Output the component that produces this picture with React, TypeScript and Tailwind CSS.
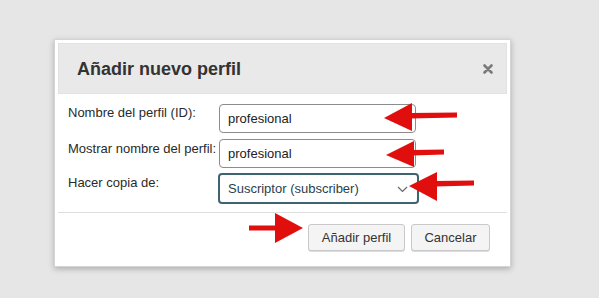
import React from "react";

export default function App() {
  return (
    <div
      className="relative w-[599px] h-[298px] bg-[#e6e6e6] overflow-hidden"
      style={{ fontFamily: '"Liberation Sans", Arial, sans-serif' }}
    >
      <div className="pt-[39px] pl-[54px]">
        <div className="w-[457px] h-[228px] bg-white border border-[#d4d4d4] shadow-[0_2px_6px_rgba(0,0,0,0.25)] p-[3px] flex flex-col">
          <div className="h-[51px] bg-[#e9e9e9] border border-[#e2e2e2] flex items-center justify-between pl-[18px] pr-[13px]">
            <span className="text-[18px] font-bold text-[#333] pt-[2px]">Añadir nuevo perfil</span>
            <svg width="10" height="10" viewBox="0 0 10 10">
              <path d="M1.5 1.5 L8.5 8.5 M8.5 1.5 L1.5 8.5" stroke="#7a7a7a" strokeWidth="2.6" strokeLinecap="round" />
            </svg>
          </div>
          <div className="grid grid-cols-[151px_auto] pl-[10px] pt-[10px] text-[13px] text-[#2a2a2a]">
            <div className="pt-[1px] leading-[15px]">Nombre del perfil (ID):</div>
            <div className="w-[197px] h-[29px] border border-[#8c8c8c] rounded-[4px] flex items-center pl-[8px] text-[#222]">profesional</div>
            <div className="pt-[2px] mt-[6px] leading-[15px] whitespace-nowrap">Mostrar nombre del perfil:</div>
            <div className="w-[197px] h-[29px] mt-[6px] border border-[#8c8c8c] rounded-[4px] flex items-center pl-[8px] text-[#222]">profesional</div>
            <div className="pt-[2px] mt-[5px] leading-[15px]">Hacer copia de:</div>
            <div className="-ml-[1px] w-[201px] h-[31px] mt-[5px] border-2 border-[#3e6472] rounded-[4px] flex items-center justify-between pl-[8px] pr-[9px] text-[#2b3f4c]">
              <span>Suscriptor (subscriber)</span>
              <svg width="11" height="7" viewBox="0 0 11 7" className="mt-[2px]">
                <path d="M1 1 L5.5 5.5 L10 1" stroke="#666" strokeWidth="1.2" fill="none" />
              </svg>
            </div>
          </div>
          <div className="mt-[8px] border-t border-[#dedede]" />
          <div className="flex justify-end gap-[6px] pr-[17px] pt-[11px]">
            <button className="w-[97px] h-[27px] bg-[#f4f4f4] border border-[#c9c9c9] rounded-[3px] text-[13px] text-[#333] shadow-[0_1px_0_#ddd]">
              Añadir perfil
            </button>
            <button className="w-[79px] h-[27px] bg-[#f4f4f4] border border-[#c9c9c9] rounded-[3px] text-[13px] text-[#333] shadow-[0_1px_0_#ddd]">
              Cancelar
            </button>
          </div>
        </div>
      </div>
      <svg className="absolute left-0 top-0" width="599" height="298" viewBox="0 0 599 298">
        <g fill="#e10e0e">
          <polygon points="384,118 412,103 412,131" />
          <polygon points="410,113 457,112.5 457,117.5 410,118.5" />
          <polygon points="386,155 414,141 414,167" />
          <polygon points="412,150 444,149.5 444,154.5 412,155.5" />
          <polygon points="409,186 437,172 437,201" />
          <polygon points="435,181 474,180.5 474,185.5 435,186.5" />
          <polygon points="303,228 275,213 275,243" />
          <polygon points="249,225.5 277,225.5 277,230.5 249,230.5" />
        </g>
      </svg>
    </div>
  );
}
